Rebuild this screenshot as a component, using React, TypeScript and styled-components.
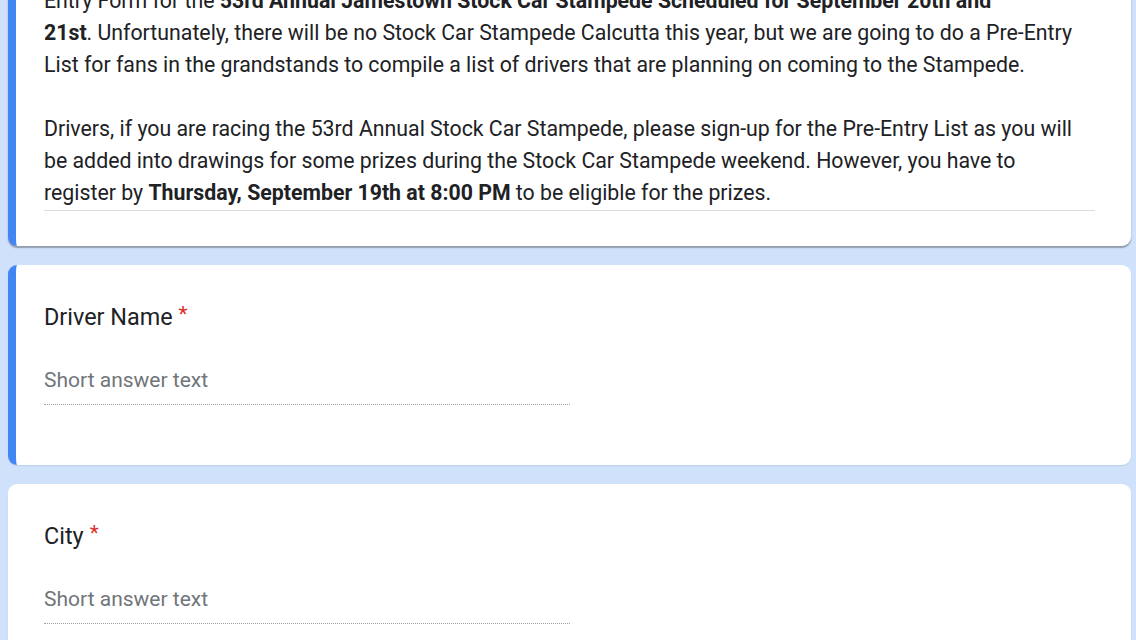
import React from 'react';
import styled, { createGlobalStyle } from 'styled-components';

const colours = {
  page: '#d0e1fb',
  card: '#ffffff',
  accent: '#4285f4',
  text: '#202124',
  muted: '#70757a',
  required: '#d93025',
  divider: '#dadce0',
};

const GlobalStyle = createGlobalStyle`
  html, body {
    margin: 0;
    padding: 0;
    background: ${colours.page};
    overflow: hidden;
  }
  body {
    font-family: Roboto, "Liberation Sans", Arial, sans-serif;
    color: ${colours.text};
  }
`;

type CardProps = { $active?: boolean; $raised?: boolean; $first?: boolean };

const Page = styled.div`
  display: flex;
  flex-direction: column;
  gap: 19px;
  padding: 0 5px 0 8px;
  height: 640px;
`;

const Card = styled.section<CardProps>`
  background: ${colours.card};
  border-radius: 9px;
  border-left: 8px solid ${({ $active }) => ($active ? colours.accent : colours.card)};
  padding: 36px 36px 60px 28px;
  box-shadow: ${({ $raised }) =>
    $raised ? '0 2px 1px rgba(60, 64, 67, 0.35), 0 1px 3px rgba(60, 64, 67, 0.15)' : '0 1px 1px rgba(60, 64, 67, 0.12)'};
  ${({ $first }) => $first && `
    margin-top: -39px;
    padding-top: 24px;
    padding-bottom: 35px;
  `}
`;

const Description = styled.div`
  font-size: 21.3px;
  line-height: 32px;
  padding-bottom: 1px;
  border-bottom: 1px solid ${colours.divider};
  white-space: nowrap;
  p {
    margin: 0;
  }
  p + p {
    margin-top: 32px;
  }
  b {
    font-weight: 700;
  }
`;

const QuestionTitle = styled.div`
  font-size: 23.4px;
  line-height: 32px;
`;

const Required = styled.span`
  color: ${colours.required};
  padding-left: 6px;
  font-size: 21px;
  vertical-align: top;
  position: relative;
  top: -3px;
`;

const ShortAnswer = styled.div`
  margin-top: 31px;
  width: 526px;
  font-size: 21px;
  line-height: 32px;
  color: ${colours.muted};
  padding-bottom: 8px;
  border-bottom: 1px dotted #9aa0a6;
`;

const Question: React.FC<{ title: string; active?: boolean }> = ({ title, active }) => (
  <Card $active={active}>
    <QuestionTitle>
      {title}
      <Required>*</Required>
    </QuestionTitle>
    <ShortAnswer>Short answer text</ShortAnswer>
  </Card>
);

const App: React.FC = () => {
  return (
    <>
      <GlobalStyle />
      <Page>
        <Card $active $raised $first>
          <Description>
            <p>
              Entry Form for the <b>53rd Annual Jamestown Stock Car Stampede Scheduled for September 20th and</b>
              <br />
              <b>21st</b>. Unfortunately, there will be no Stock Car Stampede Calcutta this year, but we are going to do a Pre-Entry
              <br />
              List for fans in the grandstands to compile a list of drivers that are planning on coming to the Stampede.
            </p>
            <p>
              Drivers, if you are racing the 53rd Annual Stock Car Stampede, please sign-up for the Pre-Entry List as you will
              <br />
              be added into drawings for some prizes during the Stock Car Stampede weekend. However, you have to
              <br />
              register by <b>Thursday, September 19th at 8:00 PM</b> to be eligible for the prizes.
            </p>
          </Description>
        </Card>
        <Question title="Driver Name" active />
        <Question title="City" />
      </Page>
    </>
  );
};

export default App;
